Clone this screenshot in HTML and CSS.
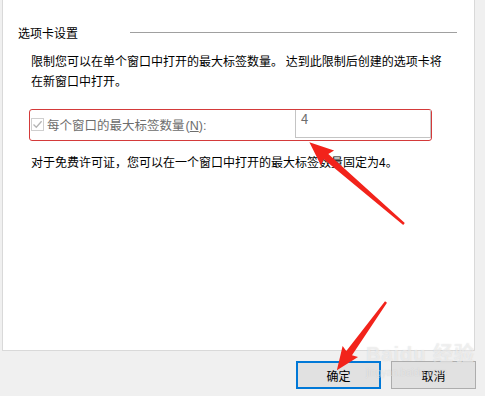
FILE: index.html
```html
<!DOCTYPE html>
<html lang="zh">
<head>
  <meta charset="UTF-8" />
  <title>选项卡设置</title>
  <link rel="stylesheet" href="styles.css">
</head>
<body>
  <div class="panel">
    <div class="group-title">
      <span>选项卡设置</span>
      <div class="rule"></div>
    </div>
    <p class="desc">限制您可以在单个窗口中打开的最大标签数量。 达到此限制后创建的选项卡将在新窗口中打开。</p>
    <div class="option">
      <label class="check">
        <span class="box">
          <svg width="11" height="11" viewBox="0 0 11 11"><path d="M1.5 5.5 L4.3 8.3 L9.6 2.2" fill="none" stroke="#b4b4b4" stroke-width="1.3"/></svg>
        </span>
        <span>每个窗口的最大标签数量<span class="latin">(<u>N</u>):</span></span>
      </label>
      <div class="num">4</div>
    </div>
    <p class="note">对于免费许可证，您可以在一个窗口中打开的最大标签数量固定为4。</p>
  </div>
  <div class="buttons">
    <button class="btn primary">确定</button>
    <button class="btn">取消</button>
  </div>

  <div class="watermark">
    <div class="wm-logo">Baidu 经验</div>
    <div class="wm-url">jingyan.baidu.com</div>
  </div>

  <svg class="arrows" width="485" height="396" viewBox="0 0 485 396">
    <g transform="translate(404 224) rotate(220.8)">
      <polygon points="0,-1.2 103,-3.5 101,-10 125,0 101,10 103,3.5 0,1.2" fill="#f2231b"/>
    </g>
    <g transform="translate(386 302) rotate(125.8)">
      <polygon points="0,-1.2 63,-3.5 61,-9.5 84,0 61,9.5 63,3.5 0,1.2" fill="#f2231b"/>
    </g>
  </svg>
</body>
</html>
```

FILE: styles.css
```css
body {
  margin: 0;
  background: #f0f0f0;
  font-family: "Noto Sans CJK SC", sans-serif;
  font-size: 12px;
  color: #000;
  overflow: hidden;
}
.panel {
  height: 351px;
  margin: 0 10px 0 2px;
  background: #fff;
  border: 1px solid #d9d9d9;
  border-top: none;
  padding-left: 15px;
  box-sizing: border-box;
}
.group-title {
  display: flex;
  align-items: center;
  height: 20px;
  padding-top: 22px;
}
.group-title .rule {
  flex: 1;
  height: 1px;
  background: #a0a0a0;
  margin: 1px 17px 0 52px;
}
.desc {
  margin: 9px 0 0 13px;
  width: 420px;
  line-height: 20px;
}
.option {
  display: flex;
  align-items: flex-start;
  width: 403px;
  height: 32px;
  margin: 18px 0 0 11px;
  border: 1px solid #d43a3a;
  border-radius: 3px;
  box-sizing: border-box;
}
.check {
  display: flex;
  align-items: center;
  gap: 3px;
  height: 26px;
  margin-top: 1px;
  padding-left: 1px;
  color: #6d6d6d;
  font-size: 12.5px;
}
.latin {
  font-family: "Liberation Sans", sans-serif;
  margin-left: 1px;
}
.box {
  display: flex;
  align-items: center;
  justify-content: center;
  width: 13px;
  height: 13px;
  box-sizing: border-box;
  border: 1px solid #cfcfcf;
}
.num {
  margin-left: auto;
  width: 136px;
  height: 28px;
  box-sizing: border-box;
  border: 1px solid #c4c4c4;
  border-top: none;
  padding: 0 0 0 5px;
  line-height: 17px;
  color: #6d6d6d;
  font-size: 13px;
}
.note {
  margin: 11px 0 0 13px;
  line-height: 20px;
}
.buttons {
  display: flex;
  justify-content: flex-end;
  gap: 10px;
  padding: 10px 9px 0 0;
}
.btn {
  width: 85px;
  height: 28px;
  font-family: "Noto Sans CJK SC", sans-serif;
  font-size: 12px;
  color: #000;
  background: #e1e1e1;
  border: 1px solid #adadad;
  padding: 0;
}
.btn.primary {
  border: 2px solid #0078d7;
}
.watermark {
  position: absolute;
  left: 366px;
  top: 338px;
  color: rgba(255, 255, 255, 0.55);
  text-shadow: 0 0 1px rgba(150, 150, 150, 0.35);
  font-family: "Liberation Sans", "Noto Sans CJK SC", sans-serif;
  pointer-events: none;
}
.wm-logo {
  font-size: 20px;
  font-weight: bold;
  letter-spacing: 1px;
}
.wm-url {
  font-size: 10px;
  margin-top: 0;
  color: rgba(255, 255, 255, 0.45);
}
.arrows {
  position: absolute;
  left: 0;
  top: 0;
  pointer-events: none;
}
```
